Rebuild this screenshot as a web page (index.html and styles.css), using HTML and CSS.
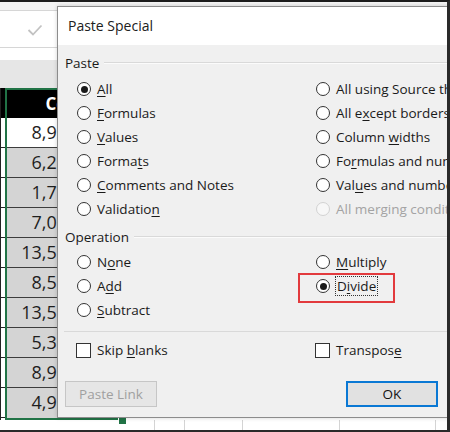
FILE: index.html
```html
<!DOCTYPE html>
<html>
<head>
<meta charset="utf-8">
<link rel="stylesheet" href="styles.css">
</head>
<body>
<div class="frame">
  <div class="topbar"></div>
  <div class="formula">
    <svg class="check" width="16" height="14" viewBox="0 0 16 14"><polyline points="1.5,7 6,11.5 14.5,2.5" fill="none" stroke="#c2c2c2" stroke-width="1.8"/></svg>
  </div>
  <div class="spacer"></div>
  <div class="colhead"></div>
  <div class="table">
    <div class="col-b">
      <div class="b-head"></div>
      <div class="b-cell"></div><div class="b-cell"></div><div class="b-cell"></div><div class="b-cell"></div><div class="b-cell"></div>
      <div class="b-cell"></div><div class="b-cell"></div><div class="b-cell"></div><div class="b-cell"></div><div class="b-cell"></div>
    </div>
    <div class="col-c">
      <div class="c-head">Cost</div>
      <div class="c-cell first">8,90</div>
      <div class="c-cell">6,20</div>
      <div class="c-cell">1,70</div>
      <div class="c-cell">7,00</div>
      <div class="c-cell">13,50</div>
      <div class="c-cell">8,50</div>
      <div class="c-cell">13,50</div>
      <div class="c-cell">5,30</div>
      <div class="c-cell">8,90</div>
      <div class="c-cell last">4,90</div>
    </div>
  </div>
  <div class="strip">
    <div class="seg w123"></div><div class="seg w32"></div><div class="seg w30"></div><div class="seg w58"></div><div class="seg w97"></div><div class="seg w96"></div>
  </div>
  <div class="handle"></div>

  <div class="dialog">
    <div class="titlebar">Paste Special</div>
    <div class="body">
      <div class="group-title g-paste"><span>Paste</span><div class="rule"></div></div>
      <div class="options o-paste">
        <div class="opt"><span class="radio on"></span><span><u>A</u>ll</span></div>
        <div class="opt"><span class="radio"></span><span>All using Source theme</span></div>
        <div class="opt"><span class="radio"></span><span><u>F</u>ormulas</span></div>
        <div class="opt"><span class="radio"></span><span>All e<u>x</u>cept borders</span></div>
        <div class="opt"><span class="radio"></span><span><u>V</u>alues</span></div>
        <div class="opt"><span class="radio"></span><span>Column <u>w</u>idths</span></div>
        <div class="opt"><span class="radio"></span><span>Forma<u>t</u>s</span></div>
        <div class="opt"><span class="radio"></span><span>Fo<u>r</u>mulas and number formats</span></div>
        <div class="opt"><span class="radio"></span><span><u>C</u>omments and Notes</span></div>
        <div class="opt"><span class="radio"></span><span>Val<u>u</u>es and number formats</span></div>
        <div class="opt"><span class="radio"></span><span>Validatio<u>n</u></span></div>
        <div class="opt disabled"><span class="radio"></span><span>All merging conditional formats</span></div>
      </div>
      <div class="group-title g-op"><span>Operation</span><div class="rule"></div></div>
      <div class="options o-op">
        <div class="opt"><span class="radio"></span><span>N<u>o</u>ne</span></div>
        <div class="opt"><span class="radio"></span><span><u>M</u>ultiply</span></div>
        <div class="opt"><span class="radio"></span><span>A<u>d</u>d</span></div>
        <div class="opt"><span class="radio on"></span><span class="focus">D<u>i</u>vide</span></div>
        <div class="opt"><span class="radio"></span><span><u>S</u>ubtract</span></div>
      </div>
      <div class="sep"></div>
      <div class="options o-check">
        <div class="opt"><span class="box"></span><span>Skip <u>b</u>lanks</span></div>
        <div class="opt"><span class="box"></span><span>Transpos<u>e</u></span></div>
      </div>
      <div class="buttons">
        <div class="btn disabled">Paste Link</div>
        <div class="btn default">OK</div>
      </div>
    </div>
  </div>
  <div class="annot"></div>
</div>
</body>
</html>
```
FILE: styles.css
```css
html, body {
  margin: 0;
  padding: 0;
  background: #ffffff;
}

.frame {
  position: relative;
  width: 450px;
  height: 432px;
  box-sizing: border-box;
  border-top: 2px solid #1c1c1c;
  border-right: 3px solid #2a2a2a;
  border-bottom: 2px solid #2a2a2a;
  overflow: hidden;
  background: #ffffff;
  font-family: "Open Sans", "Noto Sans", sans-serif;
}

.topbar {
  height: 9px;
  box-sizing: border-box;
  background: #f3f3f3;
  border-bottom: 1px solid #d6d6d6;
}

.formula {
  height: 37px;
  box-sizing: border-box;
  border-bottom: 1px solid #d6d6d6;
  display: flex;
  align-items: center;
  padding-left: 27px;
}

.check {
  display: block;
  margin-top: 2px;
}

.spacer {
  height: 12px;
}

.colhead {
  height: 28px;
  background: #e6e6e6;
}

.table {
  display: flex;
  height: 332px;
}

.col-b {
  width: 5px;
  flex: none;
  border-left: 1px solid #222;
  box-sizing: border-box;
}

.b-head {
  height: 30px;
  background: #000;
}

.b-cell {
  height: 30px;
  box-sizing: border-box;
  background: #fff;
  border-bottom: 1px solid #222;
}

.col-c {
  width: 118px;
  flex: none;
  box-sizing: border-box;
  border: 2px solid #217346;
}

.c-head {
  height: 28px;
  background: #000;
  color: #fff;
  font-weight: 700;
  font-size: 17px;
  line-height: 28px;
  text-align: center;
}

.c-cell {
  height: 30px;
  box-sizing: border-box;
  border-bottom: 1px solid #3c3c3c;
  background: #d4d4d4;
  color: #1e1e1e;
  font-size: 18px;
  line-height: 29px;
  text-align: right;
  padding-right: 54px;
}

.c-cell.first {
  background: #ffffff;
}

.c-cell.last {
  border-bottom: none;
}

.strip {
  display: flex;
  height: 10px;
}

.seg {
  height: 10px;
  box-sizing: border-box;
  border-right: 1px solid #d4d4d4;
  flex: none;
}

.w123 { width: 123px; border-right: none; }
.w32 { width: 32px; }
.w30 { width: 30px; }
.w58 { width: 58px; }
.w97 { width: 97px; }
.w96 { width: 96px; }

.handle {
  position: absolute;
  left: 118px;
  top: 414px;
  width: 7px;
  height: 7px;
  background: #217346;
  border: 1px solid #ffffff;
}

/* dialog */
.dialog {
  position: absolute;
  left: 57px;
  top: 4px;
  width: 420px;
  height: 412px;
  box-sizing: border-box;
  border: 1px solid #8c8c8c;
  background: #f0f0f0;
  box-shadow: 0 0 4px rgba(0, 0, 0, 0.18);
  color: #1a1a1a;
  font-size: 13.5px;
}

.titlebar {
  height: 38px;
  background: #ffffff;
  padding-left: 10px;
  line-height: 38px;
  font-size: 14px;
  color: #202020;
}

.body {
  display: flex;
  flex-direction: column;
}

.group-title {
  display: flex;
  align-items: center;
  height: 18px;
  margin-left: 7px;
  white-space: nowrap;
}

.g-paste { margin-top: 9px; }
.g-op { margin-top: 7px; }

.rule {
  flex: 1;
  margin-left: 5px;
  border-top: 1px solid #d9d9d9;
  border-bottom: 1px solid #fbfbfb;
}

.options {
  display: grid;
  grid-template-columns: 239px 1fr;
  grid-auto-rows: 24px;
  margin-left: 19px;
}

.o-paste { margin-top: 5px; }
.o-op { margin-top: 4px; }
.o-check { margin-top: 6px; }

.opt {
  display: flex;
  align-items: center;
  gap: 6px;
  white-space: nowrap;
}

.opt u {
  text-decoration-thickness: 1px;
  text-underline-offset: 2px;
}

.radio {
  position: relative;
  flex: none;
  width: 14px;
  height: 14px;
  box-sizing: border-box;
  border: 1px solid #333333;
  border-radius: 50%;
  background: #ffffff;
}

.radio.on::after {
  content: "";
  position: absolute;
  left: 2.5px;
  top: 2.5px;
  width: 7px;
  height: 7px;
  border-radius: 50%;
  background: #1a1a1a;
}

.opt.disabled {
  color: #a3a3a3;
}

.opt.disabled .radio {
  border-color: #d2d2d2;
  background: #f7f7f7;
}

.focus {
  outline: 1px dotted #333;
  outline-offset: 0;
  padding: 0 1px;
  line-height: 18px;
}

.sep {
  margin-top: 9px;
  margin-left: 6px;
  border-top: 1px solid #d9d9d9;
}

.box {
  flex: none;
  width: 15px;
  height: 15px;
  box-sizing: border-box;
  border: 1px solid #333333;
  background: #ffffff;
  margin-left: -1px;
}

.buttons {
  display: flex;
  gap: 189px;
  margin-top: 19px;
  margin-left: 7px;
}

.btn {
  width: 92px;
  height: 26px;
  box-sizing: border-box;
  display: flex;
  align-items: center;
  justify-content: center;
  font-size: 13.5px;
}

.btn.disabled {
  border: 1px solid #c6c6c6;
  background: #e6e6e6;
  color: #a0a0a0;
}

.btn.default {
  border: 2px solid #0a78d4;
  background: #e1e1e1;
  color: #111;
}

.annot {
  position: absolute;
  left: 298px;
  top: 271px;
  width: 97px;
  height: 30px;
  box-sizing: border-box;
  border: 2px solid #e23a3d;
}
```
